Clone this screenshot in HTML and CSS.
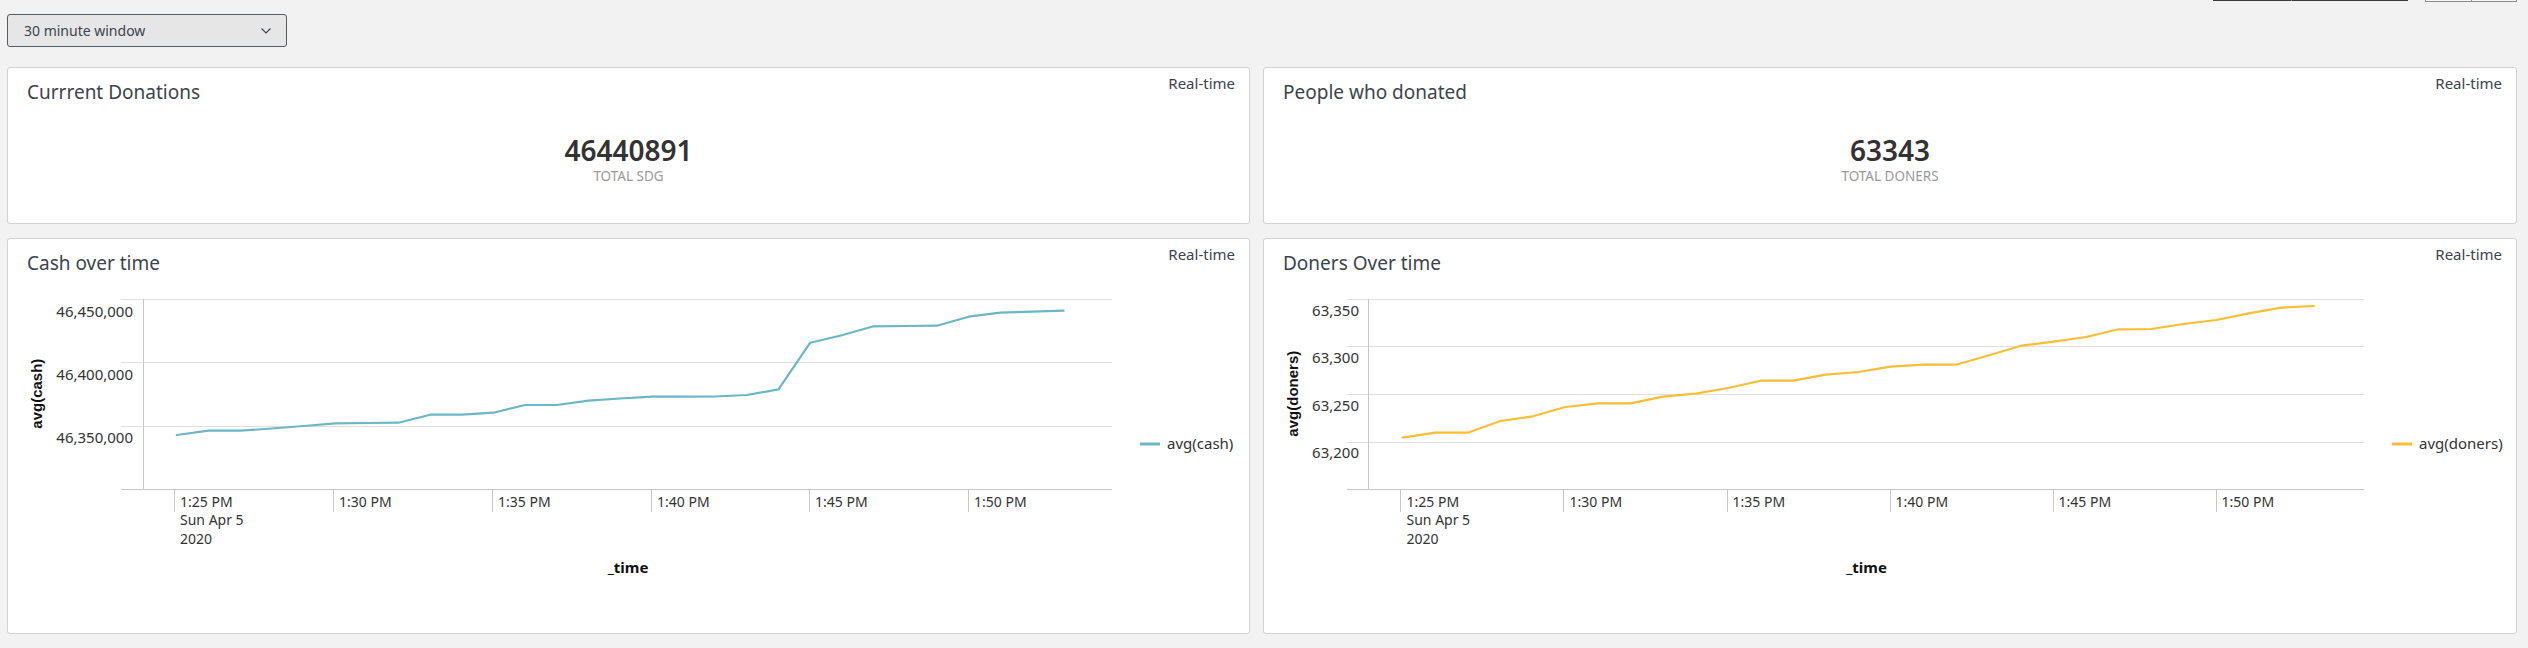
FILE: index.html
```html
<!DOCTYPE html>
<html lang="en">
<head>
<meta charset="utf-8">
<title>Donations dashboard</title>
<link rel="stylesheet" href="styles.css">
</head>
<body>
<div class="topbar">
  <div class="tb tb-dark"></div>
  <div class="tb tb-light"></div>
</div>
<div class="inputs">
  <div class="select">
    <span class="select-label">30 minute window</span>
    <svg class="chev" width="10" height="6" viewBox="0 0 10 6"><path d="M0.5 0.5 L5 5 L9.5 0.5" fill="none" stroke="#3c444d" stroke-width="1.1"/></svg>
  </div>
</div>
<main class="dashboard">
  <section class="panel">
    <div class="realtime">Real-time</div>
    <h2 class="panel-title">Currrent Donations</h2>
    <div class="stat">
      <div class="stat-value">46440891</div>
      <div class="stat-label">TOTAL SDG</div>
    </div>
  </section>
  <section class="panel">
    <div class="realtime">Real-time</div>
    <h2 class="panel-title">People who donated</h2>
    <div class="stat">
      <div class="stat-value">63343</div>
      <div class="stat-label">TOTAL DONERS</div>
    </div>
  </section>
  <section class="panel">
    <div class="realtime">Real-time</div>
    <h2 class="panel-title">Cash over time</h2>
    <svg class="chart chart-left" viewBox="8 276 1241 357">
      <g class="grid">
        <line x1="121" y1="299.5" x2="1112" y2="299.5"/>
        <line x1="121" y1="362.5" x2="1112" y2="362.5"/>
        <line x1="121" y1="426.5" x2="1112" y2="426.5"/>
      </g>
      <g class="axis">
        <line x1="121" y1="489.5" x2="1112" y2="489.5"/>
        <line x1="143.5" y1="299" x2="143.5" y2="489.5"/>
        <line x1="174.5" y1="489.5" x2="174.5" y2="511.5"/>
        <line x1="333.5" y1="489.5" x2="333.5" y2="511.5"/>
        <line x1="492.5" y1="489.5" x2="492.5" y2="511.5"/>
        <line x1="651.5" y1="489.5" x2="651.5" y2="511.5"/>
        <line x1="809.5" y1="489.5" x2="809.5" y2="511.5"/>
        <line x1="968.5" y1="489.5" x2="968.5" y2="511.5"/>
      </g>
      <g class="ylab">
        <text x="133" y="316.5">46,450,000</text>
        <text x="133" y="379.5">46,400,000</text>
        <text x="133" y="442.5">46,350,000</text>
      </g>
      <g class="xlab">
        <text x="180" y="506.7">1:25 PM</text>
        <text x="180" y="524.7">Sun Apr 5</text>
        <text x="180" y="544">2020</text>
        <text x="339" y="506.7">1:30 PM</text>
        <text x="498" y="506.7">1:35 PM</text>
        <text x="657" y="506.7">1:40 PM</text>
        <text x="815" y="506.7">1:45 PM</text>
        <text x="974" y="506.7">1:50 PM</text>
      </g>
      <text class="xtitle" x="628" y="572.5">_time</text>
      <text class="ytitle" transform="rotate(-90)" x="-393.7" y="41.5">avg(cash)</text>
      <polyline class="series cash" points="176.8,435 208.5,430.7 240.1,430.7 271.8,428.5 303.5,426 335.2,423.3 366.8,423 398.5,422.7 430.2,414.7 461.8,414.7 493.5,412.7 525.2,405 556.8,405 588.5,400.7 620.2,398.5 651.9,396.7 683.5,396.7 715.2,396.5 746.9,395 778.5,389.3 810.2,342.7 841.9,335.3 873.5,326.3 905.2,326 936.9,325.7 968.6,316.7 1000.2,312.7 1031.9,311.7 1063.6,310.7"/>
      <line class="swatch cash" x1="1140" y1="444" x2="1160" y2="444"/>
      <text class="legend" x="1167" y="448.5">avg(cash)</text>
    </svg>
  </section>
  <section class="panel">
    <div class="realtime">Real-time</div>
    <h2 class="panel-title">Doners Over time</h2>
    <svg class="chart chart-right" viewBox="1264 276 1252 357">
      <g class="grid">
        <line x1="1346.5" y1="299.5" x2="2364" y2="299.5"/>
        <line x1="1346.5" y1="346.5" x2="2364" y2="346.5"/>
        <line x1="1346.5" y1="394.5" x2="2364" y2="394.5"/>
        <line x1="1346.5" y1="442.5" x2="2364" y2="442.5"/>
      </g>
      <g class="axis">
        <line x1="1346.5" y1="489.5" x2="2364" y2="489.5"/>
        <line x1="1368.5" y1="299" x2="1368.5" y2="489.5"/>
        <line x1="1400.5" y1="489.5" x2="1400.5" y2="511.5"/>
        <line x1="1563.5" y1="489.5" x2="1563.5" y2="511.5"/>
        <line x1="1727.5" y1="489.5" x2="1727.5" y2="511.5"/>
        <line x1="1890.5" y1="489.5" x2="1890.5" y2="511.5"/>
        <line x1="2053.5" y1="489.5" x2="2053.5" y2="511.5"/>
        <line x1="2216.5" y1="489.5" x2="2216.5" y2="511.5"/>
      </g>
      <g class="ylab">
        <text x="1359" y="316">63,350</text>
        <text x="1359" y="363.3">63,300</text>
        <text x="1359" y="411">63,250</text>
        <text x="1359" y="458">63,200</text>
      </g>
      <g class="xlab">
        <text x="1406.5" y="506.7">1:25 PM</text>
        <text x="1406.5" y="524.7">Sun Apr 5</text>
        <text x="1406.5" y="544">2020</text>
        <text x="1569.5" y="506.7">1:30 PM</text>
        <text x="1732.5" y="506.7">1:35 PM</text>
        <text x="1895.5" y="506.7">1:40 PM</text>
        <text x="2058.5" y="506.7">1:45 PM</text>
        <text x="2221.5" y="506.7">1:50 PM</text>
      </g>
      <text class="xtitle" x="1866.5" y="572.5">_time</text>
      <text class="ytitle" transform="rotate(-90)" x="-393.7" y="1297.5">avg(doners)</text>
      <polyline class="series doners" points="1402.7,437.7 1435.2,432.7 1467.8,432.7 1500.3,421 1532.9,416.3 1565.4,407 1597.9,403.3 1630.5,403.3 1663,396.7 1695.6,393.7 1728.1,388 1760.6,380.7 1793.2,380.7 1825.7,374.7 1858.3,372 1890.8,366.7 1923.3,364.7 1955.9,364.7 1988.4,355.5 2021,345.7 2053.5,341.7 2086,337 2118.6,329.3 2151.1,329 2183.7,324 2216.2,320 2248.7,313.3 2281.3,307.7 2313.8,306"/>
      <line class="swatch doners" x1="2392" y1="444" x2="2412" y2="444"/>
      <text class="legend" x="2419" y="448.5">avg(doners)</text>
    </svg>
  </section>
</main>
</body>
</html>
```

FILE: styles.css
```css
html, body {
  margin: 0;
  padding: 0;
}

body {
  background: #f2f2f2;
  font-family: "Noto Sans", "Open Sans", sans-serif;
  color: #3c444d;
  width: 2528px;
  height: 648px;
  overflow: hidden;
}

/* clipped toolbar buttons at the very top */
.topbar {
  display: flex;
  justify-content: flex-end;
  align-items: flex-start;
  gap: 17px;
  height: 2px;
  padding-right: 11px;
}

.tb {
  position: relative;
  box-sizing: border-box;
}

.tb-dark {
  width: 195px;
  height: 1px;
  background: #3a3a3a;
}

.tb-dark::after {
  content: "";
  position: absolute;
  left: 78px;
  top: 0;
  width: 1px;
  height: 1px;
  background: #8a8a8a;
}

.tb-light {
  width: 92px;
  height: 2px;
  border: 1px solid #8c8c8c;
  border-top: 0;
  background: #f7f7f7;
}

.tb-light::after {
  content: "";
  position: absolute;
  left: 45px;
  top: 0;
  width: 1px;
  height: 1px;
  background: #8c8c8c;
}

/* time range input */
.inputs {
  padding: 12px 0 0 7px;
}

.select {
  box-sizing: border-box;
  width: 280px;
  height: 33px;
  display: flex;
  align-items: center;
  justify-content: space-between;
  padding: 0 15px 0 16px;
  background: #e6e6e6;
  border: 1px solid #555b61;
  border-radius: 3px;
}

.select-label {
  font-size: 14px;
  line-height: 20px;
  color: #3c444d;
}

.chev {
  display: block;
  margin-top: 1px;
}

/* dashboard grid */
.dashboard {
  display: grid;
  grid-template-columns: 1243px 1254px;
  grid-template-rows: 157px 396px;
  column-gap: 13px;
  row-gap: 14px;
  margin: 20px 0 0 7px;
}

.panel {
  position: relative;
  box-sizing: border-box;
  background: #ffffff;
  border: 1px solid #d2d2d2;
  border-radius: 3px;
  padding-top: 11px;
  overflow: hidden;
}

.panel-title {
  margin: 0;
  padding-left: 19px;
  font-size: 19px;
  line-height: 26px;
  font-weight: 400;
  color: #3c444d;
}

.realtime {
  position: absolute;
  top: 5px;
  right: 14px;
  font-size: 15px;
  line-height: 20px;
  color: #3c444d;
}

/* single value */
.stat {
  margin-top: 28px;
  text-align: center;
}

.stat-value {
  font-size: 28px;
  line-height: 34px;
  font-weight: 600;
  color: #333333;
}

.stat-label {
  font-size: 13.5px;
  line-height: 18px;
  color: #9a9a9a;
}

/* charts */
.chart {
  display: block;
  height: 357px;
}

.chart-left {
  width: 1241px;
}

.chart-right {
  width: 1252px;
}

.grid line {
  stroke: #e0e0e0;
  stroke-width: 1;
  shape-rendering: crispEdges;
}

.axis line {
  stroke: #c6c6c6;
  stroke-width: 1;
  shape-rendering: crispEdges;
}

.ylab text {
  font-family: "Noto Sans", sans-serif;
  font-size: 15px;
  fill: #333333;
  text-anchor: end;
}

.xlab text {
  font-family: "Noto Sans", sans-serif;
  font-size: 14px;
  fill: #333333;
}

.xtitle {
  font-family: "Noto Sans", sans-serif;
  font-size: 15px;
  font-weight: 700;
  fill: #111111;
  text-anchor: middle;
}

.ytitle {
  font-family: "Liberation Sans", Arial, sans-serif;
  font-size: 15px;
  font-weight: 700;
  fill: #111111;
  text-anchor: middle;
}

.series {
  fill: none;
  stroke-width: 2.2;
  stroke-linejoin: round;
  stroke-linecap: round;
}

.swatch {
  stroke-width: 3;
}

.cash {
  stroke: #6bb7c7;
}

.doners {
  stroke: #f8be34;
}

.legend {
  font-family: "Noto Sans", sans-serif;
  font-size: 15px;
  fill: #333333;
}
```
